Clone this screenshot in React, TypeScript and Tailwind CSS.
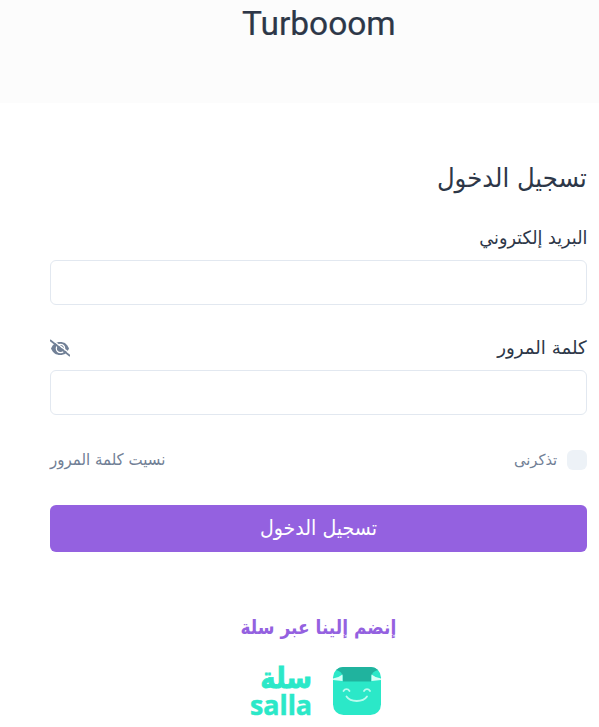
const arabic = "font-['DejaVu_Sans',sans-serif]";

function EyeOff() {
  return (
    <svg width="20" height="18" viewBox="0 0 20 18" fill="none" className="mb-0.5" aria-hidden="true">
      <path d="M1 9.500C3 5 6 3 10.200 3S17 5 19 9.500C17 14 14.500 16 10.200 16S3 14 1 9.500Z" fill="#718096" />
      <circle cx="10.500" cy="9.500" r="4.200" stroke="#fff" strokeWidth="1.200" />
      <circle cx="11.500" cy="8.500" r="1" fill="#fff" />
      <path d="M1.500 0.500L20 14.500" stroke="#fff" strokeWidth="1.400" />
      <path d="M0.500 1.500L19.500 16.500" stroke="#718096" strokeWidth="1.700" strokeLinecap="round" />
    </svg>
  );
}

function SallaBag() {
  return (
    <svg width="50" height="50" viewBox="0 0 50 50" aria-hidden="true">
      <rect x="1" y="1" width="48" height="48" rx="10.5" fill="#2be8c8" />
      <path d="M4 4Q7 1 11 1H39Q43 1 46 4Q43 4.500 41 6.500L39 10V15.500H11V10L9 6.500Q7 4.500 4 4Z" fill="#20b39e" />
      <path d="M1 12.500Q7 11.500 10.500 8.500V15L1 14Z" fill="#d5fff6" />
      <path d="M49 12.500Q43 11.500 39.500 8.500V15L49 14Z" fill="#d5fff6" />
      <path
        d="M11.500 25C13 22.500 16 22.500 17.500 25M32 25C33.500 22.500 36.500 22.500 38 25M14.500 30.500C18.500 36.500 31 36.500 35 30.500"
        fill="none"
        stroke="#b9fbee"
        strokeWidth="1.8"
        strokeLinecap="round"
      />
    </svg>
  );
}

export default function App() {
  return (
    <div dir="rtl" className={`h-[727px] w-[599px] overflow-hidden bg-white text-[#2d3748] ${arabic}`}>
      <header className="flex h-[103px] justify-center bg-[#fcfcfc] pl-[38px]">
        <h1 dir="ltr" className="w-[154px] origin-left scale-x-[0.985] whitespace-nowrap font-['Roboto',sans-serif] text-[34px] leading-[46px] [-webkit-text-stroke:0.2px_#2d3748]">
          Turbooom
        </h1>
      </header>
      <main className="pr-3 pl-[50px] pt-[54px]">
        <h2 className="flex h-[42px] items-center text-[24px]">
          <span className="inline-block origin-right scale-x-[1.014] scale-y-[1.08] whitespace-nowrap">تسجيل الدخول</span>
        </h2>
        <label className="mt-[26px] flex h-7 items-center text-[17px]">
          <span className="inline-block origin-right scale-x-[1.035] scale-y-[1.08] whitespace-nowrap">البريد إلكتروني</span>
        </label>
        <input className="mt-[7px] block h-[45px] w-full rounded-md border border-[#e2e8f0] outline-none" />
        <div className="mt-[30px] flex h-7 items-center justify-between text-[17px]">
          <span className="inline-block origin-right scale-x-[1.07] scale-y-[1.08] whitespace-nowrap">كلمة المرور</span>
          <EyeOff />
        </div>
        <input type="password" className="mt-[7px] block h-[45px] w-full rounded-md border border-[#e2e8f0] outline-none" />
        <div className="mt-[31px] flex h-7 items-center justify-between text-[15px] text-[#718096]">
          <label className="flex items-center gap-[10px]">
            <span className="h-5 w-5 rounded-md bg-[#edf2f7]" />
            <span className="inline-block origin-right scale-x-[1.05] scale-y-[1.08] whitespace-nowrap text-[14px]">تذكرنى</span>
          </label>
          <a className="inline-block origin-left scale-y-[1.08] whitespace-nowrap">نسيت كلمة المرور</a>
        </div>
        <button className="mt-[31px] flex h-[47px] w-full items-center justify-center rounded-md bg-[#9461e0] pb-0.5 text-[19px] text-white">
          <span className="inline-block scale-y-[1.08] whitespace-nowrap">تسجيل الدخول</span>
        </button>
        <div className="mt-[58px] flex h-8 items-center justify-center text-[18px] font-bold text-[#9461e0]">
          <span className="inline-block scale-x-[0.945] scale-y-[1.08] whitespace-nowrap">إنضم إلينا عبر سلة</span>
        </div>
        <div className="mt-6 mr-[205px] flex gap-5">
          <SallaBag />
          <div className="flex w-[63px] flex-col font-bold text-[#2be8c8]">
            <span className="h-[27px] origin-top-right scale-x-[1.08] scale-y-[1.2] whitespace-nowrap text-[24px] leading-[21px] [-webkit-text-stroke:0.7px_#2be8c8]">سلة</span>
            <span dir="ltr" className="h-[24px] origin-right scale-x-[1.03] whitespace-nowrap text-right font-['Open_Sans',sans-serif] text-[26px] leading-[24px] [-webkit-text-stroke:0.5px_#2be8c8]">
              salla
            </span>
          </div>
        </div>
      </main>
    </div>
  );
}
